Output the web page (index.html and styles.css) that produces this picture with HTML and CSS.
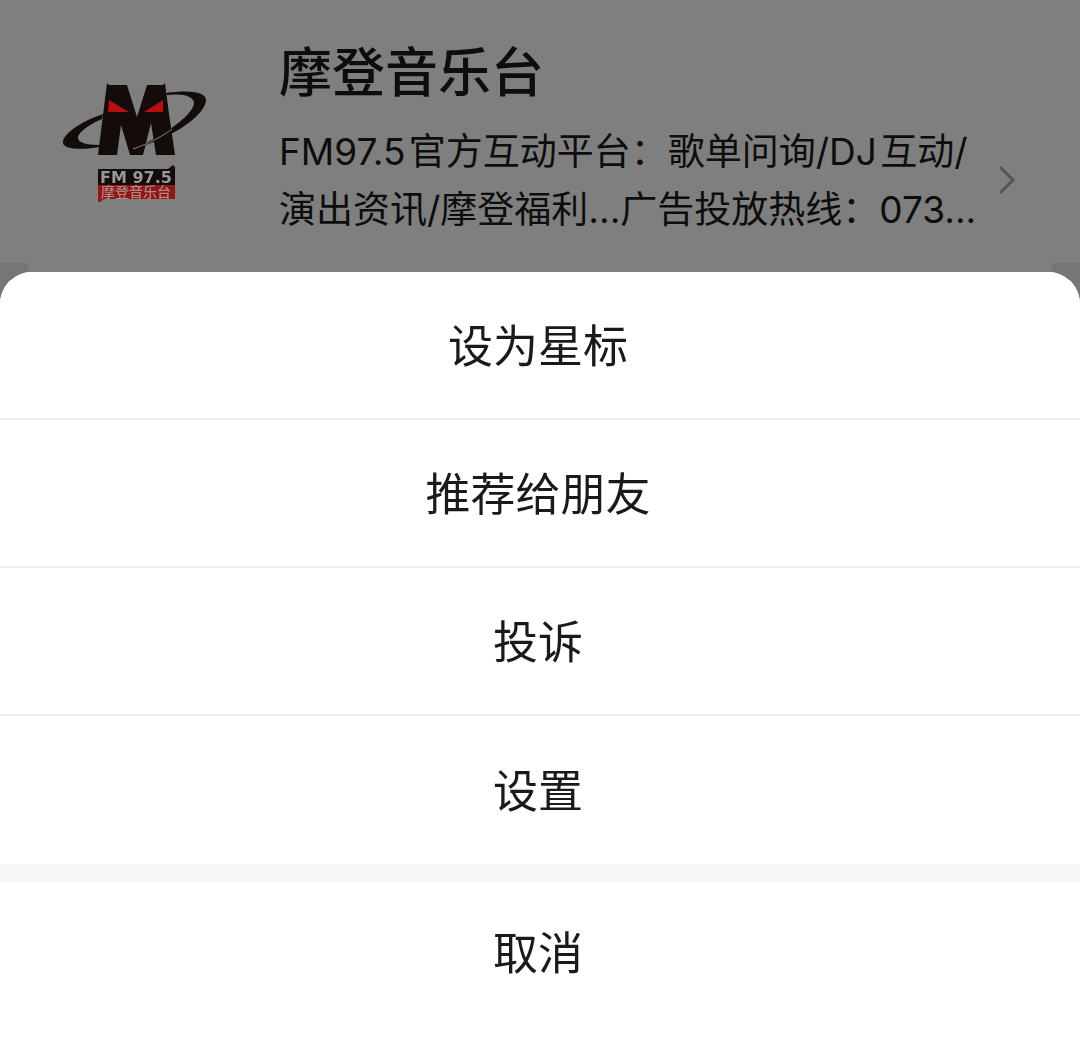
FILE: index.html
```html
<!DOCTYPE html>
<html lang="zh-CN">
<head>
    <meta charset="UTF-8">
    <meta name="viewport" content="width=device-width, initial-scale=1">
    <title>摩登音乐台</title>
    <link rel="stylesheet" href="styles.css">
</head>
<body>
<div class="page">
    <header class="profile">
        <svg class="logo" viewBox="0 0 150 130" role="img" aria-label="FM97.5 摩登音乐台">
            <!-- Orbit ring -->
            <path fill="#140c0a" d="M43 40 C22 47 2 60 3 69 C4 77 32 76 53 70 C34 72 19 71 18 64 C18 58 30 50 42 45 Z"/>
            <path fill="#140c0a" d="M106 19 C127 16 147 17 146 27 C143 45 106 66 73 75 C103 62 131 43 134 30 C135 22 122 19 107 21 Z"/>
            <!-- Letter mark -->
            <path fill="#140c0a" d="M47 9 L49 11 H67 L77 43 L87 11 H103 L105 9 L109 40 L115 81 H96 L91 49 L83 81 H70 L61 51 L57 81 H38 L43 41 Z"/>
            <path fill="none" stroke="#808080" stroke-width="1" d="M73 75 C90 69 103 62 112 55"/>
            <path fill="#b81010" d="M49 26 L69 38 H48 Z M103 26 V38 H84 Z"/>
            <!-- Name plate -->
            <path fill="#140c0a" d="M38 95 H108 L113 91 L115 93 V112 H38 Z"/>
            <path fill="#911616" d="M38 111 H115 V125 H44 L40 128 H38 Z"/>
            <text class="logo-fm" x="40" y="109">FM 97.5</text>
            <text class="logo-name" x="41" y="123">摩登音乐台</text>
        </svg>
        <div class="info">
            <h1 class="name">摩登音乐台</h1>
            <p class="desc">FM97.5&hairsp;官方互动平台：歌单问询/DJ&hairsp;互动/<br>演出资讯/摩登福利...广告投放热线：073...</p>
        </div>
        <svg class="arrow" viewBox="0 0 18 30" aria-hidden="true">
            <path d="M2 2 L15 15 L2 28"/>
        </svg>
    </header>
    <main class="card"></main>
</div>

<div class="mask"></div>

<div class="sheet" role="dialog" aria-label="更多操作">
    <div class="menu">
        <button class="item" type="button">设为星标</button>
        <button class="item" type="button">推荐给朋友</button>
        <button class="item" type="button">投诉</button>
        <button class="item" type="button">设置</button>
    </div>
    <button class="cancel" type="button">取消</button>
</div>
</body>
</html>
```

FILE: styles.css
```css
* {
    box-sizing: border-box;
}

body {
    margin: 0;
    font-family: Inter, "Noto Sans CJK SC", sans-serif;
    background-color: #ededed;
    color: #1a1a1a;
}

.page {
    display: flex;
    flex-direction: column;
    min-height: 100vh;
}

.profile {
    display: flex;
    align-items: center;
    padding: 37px 64px 24px 60px;
    background-color: #fff;
}

/* drawn above the mask, in its dimmed colors */
.logo {
    position: relative;
    z-index: 2;
    flex: none;
    width: 150px;
    height: 130px;
    margin-top: 2px;
}

.logo-fm {
    font-family: "DejaVu Sans", sans-serif;
    font-size: 16px;
    font-weight: 700;
    fill: #999;
}

.logo-name {
    font-family: "Noto Sans CJK SC", sans-serif;
    font-size: 14px;
    font-weight: 500;
    fill: #b08888;
}

.info {
    flex: 1;
    min-width: 0;
    margin-left: 69px;
}

.name {
    margin: 0 0 14px;
    font-size: 53px;
    line-height: 72px;
    font-weight: 500;
}

.desc {
    margin: 0;
    font-size: 37px;
    line-height: 58px;
    white-space: nowrap;
}

.arrow {
    flex: none;
    align-self: flex-end;
    width: 18px;
    height: 30px;
    margin-bottom: 44px;
}

.arrow path {
    fill: none;
    stroke: #a8a8a8;
    stroke-width: 3;
}

.card {
    flex: 1;
    margin: 0 28px;
    background-color: #fff;
}

.mask {
    position: fixed;
    inset: 0;
    z-index: 1;
    background-color: rgba(0, 0, 0, 0.5);
}

.sheet {
    position: fixed;
    left: 0;
    right: 0;
    bottom: 0;
    z-index: 3;
    padding-bottom: 24px;
    border-radius: 32px 32px 0 0;
    background-color: #fff;
    overflow: hidden;
}

.menu {
    border-bottom: 18px solid #f6f6f6;
}

.item,
.cancel {
    display: block;
    width: 100%;
    height: 148px;
    padding: 0 4px 4px 0;
    border: none;
    background-color: #fff;
    color: #1a1a1a;
    font-family: inherit;
    font-size: 45px;
    cursor: pointer;
}

.item:not(:last-child) {
    border-bottom: 2px solid #ededed;
}

.cancel {
    height: 141px;
}
```
